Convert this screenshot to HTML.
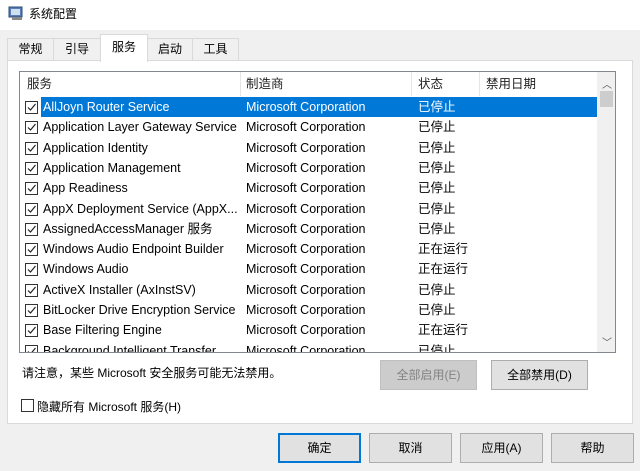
<!DOCTYPE html><html><head><meta charset="utf-8"><style>
*{margin:0;padding:0;box-sizing:border-box}
body{width:640px;height:471px;background:#f0f0f0;font-family:"Liberation Sans","Noto Sans CJK SC",sans-serif;font-size:12px;color:#000;position:relative;overflow:hidden}
.a{position:absolute}
.title{left:0;top:0;width:640px;height:30px;background:#fff}
.tab{top:38px;height:23px;background:#f0f0f0;border:1px solid #d9d9d9;border-bottom:none;text-align:center;line-height:21px;font-size:12px}
.panel{left:7px;top:60px;width:626px;height:364px;background:#fff;border:1px solid #d9d9d9}
.list{left:19px;top:71px;width:597px;height:282px;border:1px solid #828790;background:#fff;overflow:hidden}
.row{position:absolute;left:0;height:20px;line-height:20px;width:577px;white-space:nowrap;font-size:12.5px}
.row span{position:absolute}
.cb{position:absolute;left:5px;top:4px;width:13px;height:13px;border:1px solid #333;background:#fff}
.cb svg{position:absolute;left:0;top:0}
.btn{height:30px;background:#e1e1e1;border:1px solid #adadad;text-align:center;line-height:28px;font-size:12px}
</style></head><body>
<div class="a title"></div>
<svg class="a" style="left:8px;top:5px" width="16" height="16"><rect x="1" y="2" width="13" height="10" fill="#5a7fb5" stroke="#2a4a7a"/><rect x="3" y="4" width="9" height="6" fill="#cfe0f5"/><rect x="4" y="12" width="10" height="3" fill="#888"/></svg>
<div class="a" style="left:29px;top:5px;font-size:12px">系统配置</div>
<div class="a tab" style="left:7px;width:47px">常规</div>
<div class="a tab" style="left:53px;width:48px">引导</div>
<div class="a tab" style="left:147px;width:46px">启动</div>
<div class="a tab" style="left:192px;width:47px">工具</div>
<div class="a panel"></div>
<div class="a tab" style="left:100px;top:34px;height:28px;width:48px;background:#fff;z-index:2;line-height:24px">服务</div>
<div class="a list">
 <div class="row" style="top:0;height:24px;line-height:24px;color:#222">
  <span style="left:7px">服务</span><span style="left:226px">制造商</span><span style="left:398px">状态</span><span style="left:466px">禁用日期</span>
 </div>
 <div class="a" style="left:220px;top:0;width:1px;height:24px;background:#e5e5e5"></div>
 <div class="a" style="left:391px;top:0;width:1px;height:24px;background:#e5e5e5"></div>
 <div class="a" style="left:459px;top:0;width:1px;height:24px;background:#e5e5e5"></div>
 <div class="a" style="left:577px;top:0;width:18px;height:280px;background:#f0f0f0"></div>
 <div class="a" style="left:580px;top:19px;width:13px;height:16px;background:#cdcdcd"></div>
 <div class="a" style="left:582px;top:4px;font-size:10px;color:#555">︿</div>
 <div class="a" style="left:582px;top:262px;font-size:10px;color:#555">﹀</div>
 <div id="rows"></div>
</div>
<div class="a" style="left:22px;top:364px">请注意，某些 Microsoft 安全服务可能无法禁用。</div>
<div class="a btn" style="left:380px;top:360px;width:97px;color:#838383;background:#cccccc;border-color:#bfbfbf">全部启用(E)</div>
<div class="a btn" style="left:491px;top:360px;width:97px">全部禁用(D)</div>
<div class="a" style="left:21px;top:399px;width:13px;height:13px;border:1px solid #333;background:#fff"></div>
<div class="a" style="left:37px;top:398px">隐藏所有 Microsoft 服务(H)</div>
<div class="a btn" style="left:278px;top:433px;width:83px;border:2px solid #0078d7;line-height:26px">确定</div>
<div class="a btn" style="left:369px;top:433px;width:83px">取消</div>
<div class="a btn" style="left:460px;top:433px;width:83px">应用(A)</div>
<div class="a btn" style="left:551px;top:433px;width:83px">帮助</div>
<script>
var d=[["AllJoyn Router Service","已停止"],["Application Layer Gateway Service","已停止"],["Application Identity","已停止"],["Application Management","已停止"],["App Readiness","已停止"],["AppX Deployment Service (AppX...","已停止"],["AssignedAccessManager 服务","已停止"],["Windows Audio Endpoint Builder","正在运行"],["Windows Audio","正在运行"],["ActiveX Installer (AxInstSV)","已停止"],["BitLocker Drive Encryption Service","已停止"],["Base Filtering Engine","正在运行"],["Background Intelligent Transfer...","已停止"]];
var h="";d.forEach(function(r,i){var t=25+i*20.3;var sel=i==0;
h+='<div class="row" style="top:'+t+'px"><div class="cb"><svg width="11" height="11"><path d="M2 5.5 L4.5 8 L9.5 2" stroke="#222" stroke-width="1.2" fill="none"/></svg></div>'+
(sel?'<div style="position:absolute;left:21px;top:0;width:556px;height:20px;background:#0078d7"></div>':'')+
'<span style="left:23px;color:'+(sel?'#fff':'#000')+'">'+r[0]+'</span><span style="left:226px;color:'+(sel?'#fff':'#000')+'">Microsoft Corporation</span><span style="left:398px;color:'+(sel?'#fff':'#000')+'">'+r[1]+'</span></div>';});
document.getElementById("rows").innerHTML=h;
</script>
</body></html>
